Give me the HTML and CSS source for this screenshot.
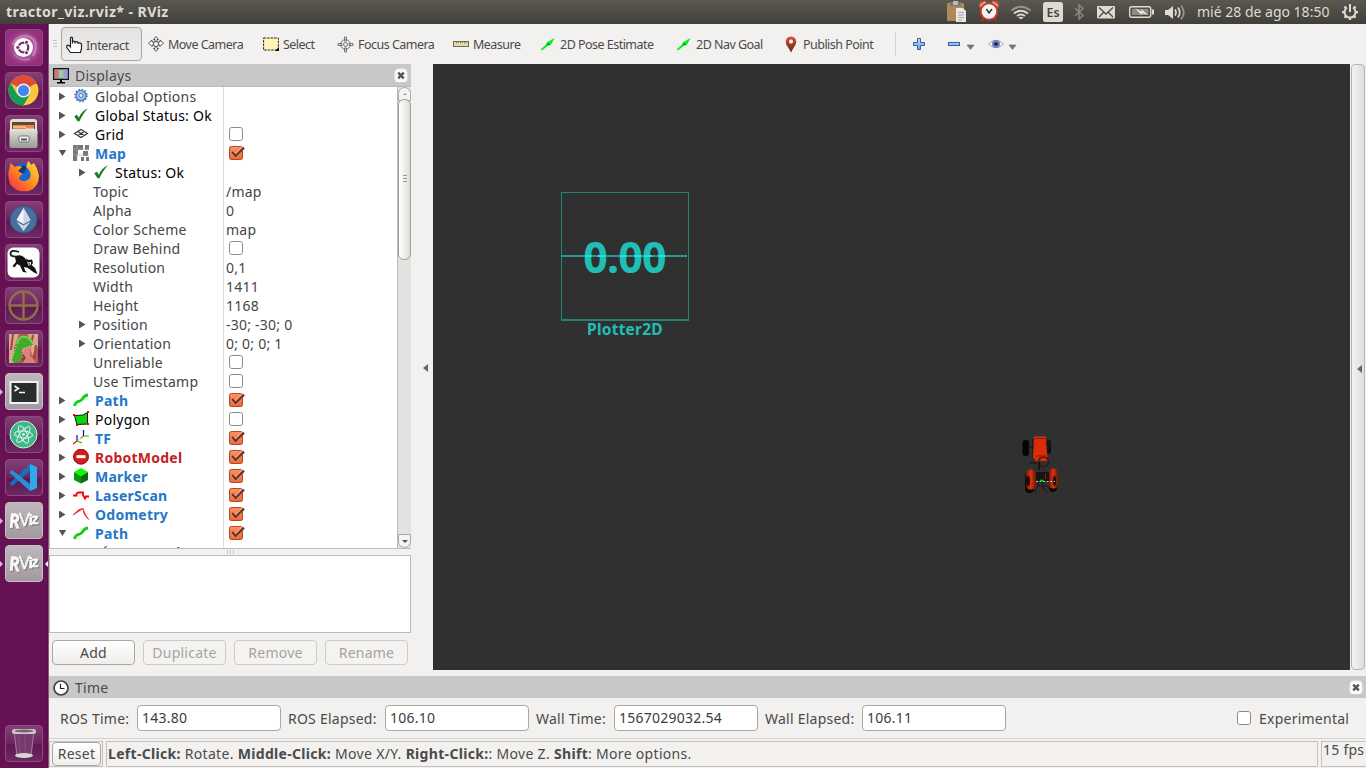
FILE: index.html
```html
<!DOCTYPE html>
<html lang="es">
<head>
<meta charset="utf-8">
<title>tractor_viz.rviz* - RViz</title>
<link rel="stylesheet" href="styles.css">
</head>
<body>
<svg class="defs" width="0" height="0">
  <defs>
    <linearGradient id="orange" x1="0" y1="0" x2="0" y2="1"><stop offset="0" stop-color="#ff9162"/><stop offset="1" stop-color="#e9683d"/></linearGradient>
    <linearGradient id="pin" x1="0" y1="0" x2="0" y2="1"><stop offset="0" stop-color="#e0502e"/><stop offset="1" stop-color="#5c2a1a"/></linearGradient>
    <linearGradient id="fox" x1="1" y1="0" x2="0" y2="1"><stop offset="0" stop-color="#ffe23c"/><stop offset=".5" stop-color="#ff8a1e"/><stop offset="1" stop-color="#f2214d"/></linearGradient>
    <linearGradient id="metal" x1="0" y1="0" x2="0" y2="1"><stop offset="0" stop-color="#e2e2e0"/><stop offset="1" stop-color="#9b9a98"/></linearGradient>
    <linearGradient id="blue" x1="0" y1="0" x2="0" y2="1"><stop offset="0" stop-color="#c9def5"/><stop offset="1" stop-color="#6f9fd8"/></linearGradient>
    <linearGradient id="wheel" x1="0" y1="0" x2="1" y2="0"><stop offset="0" stop-color="#7a1804"/><stop offset=".5" stop-color="#dc3208"/><stop offset="1" stop-color="#7a1804"/></linearGradient>
  </defs>
  <symbol id="i-check" viewBox="0 0 16 16"><path d="M1.200 9.200 4 7.800 5.800 10.800C8 6 10.500 3.300 14.800 1.200 11.500 5 8.800 9 6.500 14.200H4.600Z" fill="#1c7a22"/></symbol>
  <symbol id="i-path" viewBox="0 0 16 16"><path d="M1.600 14C2 10.500 4 9.800 6.500 9.200 11 8 9 3.500 15 3" fill="none" stroke="#0cd40c" stroke-width="2.900"/></symbol>
  <symbol id="i-box" viewBox="0 0 17 16"><rect x="1.500" y="1.500" width="13" height="13" rx="2.200" fill="#fff" stroke="#8f8b84"/></symbol>
  <symbol id="i-on" viewBox="0 0 17 16"><rect x="1.500" y="1.500" width="13" height="13" rx="1.800" fill="url(#orange)" stroke="#b9471f"/><path d="M4.500 7.500 7.500 10.800 15 3" fill="none" stroke="#ffb797" stroke-width="3.400"/><path d="M4.200 7 7.500 11 16 2.600" fill="none" stroke="#6b3524" stroke-width="2.300"/></symbol>
  <symbol id="i-close" viewBox="0 0 14 16"><rect x="1" y="1" width="12" height="14" rx="3.500" fill="#fbfbfa" stroke="#eeeeec"/><path d="M1.500 13.500Q2 15 4 15H10Q12 15 12.500 13.500" fill="none" stroke="#b3b1ad"/><path d="M4.200 4.700 9.800 10.300M9.800 4.700 4.200 10.300" stroke="#555" stroke-width="2.400"/></symbol>
  <symbol id="i-arrow" viewBox="0 0 18 16"><path d="M.500 14.500 7.500 7.700 6.700 6.800 16.500 1 12 9.500 9.800 9.300 2.500 15Z" fill="#08ee2b"/><path d="M8 8.500 10 7 10.500 9Z" fill="#054d0c"/></symbol>
</svg>

<header class="topbar">
  <span class="title">tractor_viz.rviz* - RViz</span>
  <svg class="tray" width="420" height="24" viewBox="0 0 420 24">
    <g><rect x="1" y="3" width="17" height="18" rx="1" fill="#b08857"/><rect x="4" y="2" width="11" height="4" fill="#77766f"/><rect x="7" y="1" width="5" height="4" fill="#b9b8b2"/><path d="M10 8H17L20 11V22H10Z" fill="#e9e8e5"/><path d="M12 12.500H18M12 15H18M12 17.500H18M12 20H16" stroke="#aaa"/></g>
    <g><circle cx="37" cy="5" r="4" fill="#d2523e"/><circle cx="49" cy="5" r="4" fill="#d2523e"/><path d="M34.500 6 39.500 2M46.500 2 51.500 6" stroke="#eeaa98" stroke-width="2"/><path d="M37.500 18 35.500 21M48.500 18 50.500 21" stroke="#a83020" stroke-width="2.500"/><circle cx="43" cy="11.500" r="8.300" fill="#f6f4f1" stroke="#c33a28" stroke-width="2"/><path d="M40.500 9 43 13 46 9" fill="none" stroke="#333" stroke-width="1.500"/></g>
    <g fill="none" stroke="#dfdbd2" stroke-width="2"><path d="M65.500 10.500Q75 3 84.500 10.500" stroke="#969389"/><path d="M68 13.500Q75 8 82 13.500"/><path d="M71 16Q75 13 79 16"/></g><path d="M72.200 17H77.800L75 19.500Z" fill="#dfdbd2"/>
    <rect x="97" y="2" width="20" height="20" rx="2.500" fill="#dfdbd2"/><text x="100.500" y="17" class="kb">Es</text>
    <path d="M129 8.200 137 15.500 133 19V5L137 8.500 129 15.800" fill="none" stroke="#8b887f" stroke-width="1.500"/>
    <rect x="151" y="6" width="18" height="12.500" rx="1" fill="#dfdbd2"/><path d="M153 7.500 160 14 167 7.500M153 17 157.500 12.500M167 17 162.500 12.500" fill="none" stroke="#4a4943" stroke-width="1.300"/>
    <rect x="183.700" y="6.700" width="21" height="10.600" rx="2" fill="none" stroke="#dfdbd2" stroke-width="1.400"/><rect x="206" y="9.500" width="2" height="5" fill="#dfdbd2"/><rect x="186" y="9" width="16.500" height="6" fill="#8e8b83"/><path d="M189 8 196 12 195 9 202 15 195.500 13 196 15.500Z" fill="#f2efe8"/>
    <path d="M219 10H222L227 6V19L222 15H219Z" fill="#dfdbd2"/><path d="M229 9.500Q231 12.500 229 15.500M232 7.500Q235.500 12.500 232 17.500" fill="none" stroke="#dfdbd2" stroke-width="1.700"/><path d="M235 5.500Q240.500 12.500 235 19.500" fill="none" stroke="#969389" stroke-width="1.700"/>
    <text x="251" y="17.200" class="clock">mié 28 de ago 18:50</text>
    <g stroke="#dfdbd2" fill="none"><path d="M401 7.500A5.500 5.500 0 1 0 407 7.500" stroke-width="2"/><path d="M404 4V12" stroke-width="2"/><path d="M396 12.200H398.500M409.500 12.200H412M398.500 6.500 400 8M408 8 409.500 6.500M398.500 17.800 400 16.200M408 16.200 409.500 17.800M404 17.500V20" stroke-width="2.200"/></g>
  </svg>
</header>

<div class="desktop">
<nav class="launcher">
  <div class="tile dash"><svg viewBox="0 0 37 37"><path d="M8 16A12.500 12.500 0 0 1 29 11Q33 18 28 27" fill="none" stroke="#d9a6cd" stroke-width="3" opacity=".5"/><path d="M9 25Q15 33 25 30" fill="none" stroke="#d9a6cd" stroke-width="2" opacity=".4"/><circle cx="18.500" cy="18.500" r="9.500" fill="#fff"/><circle cx="18.500" cy="18.500" r="4.800" fill="none" stroke="#7a2a6d" stroke-width="2.300"/><g fill="#7a2a6d" stroke="#fff"><circle cx="12.700" cy="18.500" r="2"/><circle cx="21.500" cy="13.300" r="2"/><circle cx="21.500" cy="23.700" r="2"/></g></svg></div>
  <div class="tile"><svg viewBox="0 0 37 37"><circle cx="18.500" cy="18.500" r="15" fill="#fbc63c"/><path d="M18.500 18.500 5.500 11A15 15 0 0 1 31.500 11Z" fill="#df4b3b"/><path d="M5.500 11A15 15 0 0 0 18.500 33.500L25 22 18.500 25 12 22Z" fill="#159c58"/><path d="M18.500 11.500H32" stroke="#df4b3b"/><circle cx="18.500" cy="18.500" r="7" fill="#f2f2f2"/><circle cx="18.500" cy="18.500" r="5.500" fill="#4386f0"/></svg></div>
  <div class="tile"><svg viewBox="0 0 37 37"><path d="M5 7Q5 4 8 4H29Q32 4 32 7V16H5Z" fill="#dededb"/><rect x="7" y="7" width="23" height="8" fill="#69462b"/><path d="M8 10H29V15H8Z" fill="#e7854b"/><path d="M8 12H20L22 14H29" stroke="#f8e2c8" fill="none"/><rect x="4.500" y="14" width="28" height="19" rx="2" fill="url(#metal)"/><rect x="14" y="21" width="10" height="6" rx="1" fill="#eee" stroke="#777"/><path d="M16 24.500H22" stroke="#555" stroke-width="2"/></svg></div>
  <div class="tile"><svg viewBox="0 0 37 37"><circle cx="19" cy="17" r="12" fill="#1667cf"/><path d="M12 10Q17 6 22 8L20 14 15 17 12 14Z" fill="#17357f"/><path d="M5.500 5 10 9Q14 7 17 9L13 13 18 16Q14 18 14 21 20 26 25 20 27 13 21 9L23 3Q26 5 26 7L29 5Q33 11 34 18 34 29 24 33 11 35 5 26 2 17 4.500 10Z" fill="url(#fox)"/></svg></div>
  <div class="tile"><svg viewBox="0 0 37 37"><circle cx="18.500" cy="18.500" r="13.500" fill="#496e9d" stroke="#35547e"/><path d="M18.500 7 11.500 19 18.500 23 25.500 19Z" fill="#f4f6fa"/><path d="M18.500 7V23L25.500 19ZM11.500 20.500 18.500 30 25.500 20.500 18.500 24.500Z" fill="#cbd5e5"/></svg></div>
  <div class="tile"><svg viewBox="0 0 37 37"><rect x="2.500" y="3.500" width="32" height="30" rx="6" fill="#fdfdfd"/><path d="M14 8Q5 5 5.500 10 6 13 13 12.500" fill="none" stroke="#222" stroke-width="1.800"/><path d="M10 13Q15 9 20 14L21.500 17 21 14.500 23.500 16 27 15.500 28 19 26.500 21 30 24 32.500 30 29 28.500 23 24 19 23 20 26.500 22 28.500 18 28 15 21.500 12 20 9.500 23.500 7.500 22 11 18Z" fill="#111"/><path d="M22 17.500 24 18.500 26 17.500 26 20.500 23.500 22Z" fill="#ddd"/><path d="M23.500 20H25" stroke="#111"/></svg></div>
  <div class="tile"><svg viewBox="0 0 37 37"><g fill="none" stroke="#917047" stroke-width="2.400"><circle cx="18.500" cy="18.500" r="14"/><path d="M18.500 5V32M5 18.500H32"/></g></svg></div>
  <div class="tile"><svg viewBox="0 0 37 37"><rect x="4" y="4" width="29" height="29" fill="#b65a50"/><path d="M4 4H14L9 18V33H4ZM23 4H33V16L27 26Z" fill="#dda88a"/><path d="M8 4 6 20M28 5 26 15M31 15 29 29" stroke="#a04746" stroke-width="2"/><path d="M17 16H26L25 25 31 33H17Z" fill="#dc8276"/><path d="M17 22 21 28 17 33" fill="#8f3c3e"/><path d="M11 15Q13 5 21 6.500L26 12Q29 12 28 15L19 18 16.500 19 17 27Q16 32 10 33 5 31 8 25Z" fill="#42aa2d"/><path d="M12 14Q14 5 21 7 26 9 28 14" fill="none" stroke="#6cd24f" stroke-width="2"/><path d="M11 16 7 29M28 15.500 18 19 17.500 29" fill="none" stroke="#d9f6d2" stroke-dasharray="1 2"/></svg></div>
  <div class="tile light running"><svg viewBox="0 0 37 37"><rect x="5.500" y="9" width="27" height="21" fill="#282d2e" stroke="#f2f2f2" stroke-width="2"/><path d="M9.500 13 13.500 15.500 9.500 18M14 19.500H20" fill="none" stroke="#fff" stroke-width="1.500"/></svg></div>
  <div class="tile"><svg viewBox="0 0 37 37"><circle cx="18.500" cy="18.500" r="13.500" fill="#3fb98a" stroke="#ddeee5"/><g fill="none" stroke="#d9f4e6" stroke-width="1"><ellipse cx="18.500" cy="18.500" rx="3.500" ry="9.500" transform="rotate(-25 18.500 18.500)"/><ellipse cx="18.500" cy="18.500" rx="3.500" ry="9.500" transform="rotate(40 18.500 18.500)"/><ellipse cx="18.500" cy="18.500" rx="3.500" ry="9" transform="rotate(95 18.500 18.500)"/></g><circle cx="18.500" cy="18.500" r="1.300" fill="#fff"/></svg></div>
  <div class="tile"><svg viewBox="0 0 37 37"><path d="M25 5 32 8V29L25 32Z" fill="#2fa8ef"/><path d="M25 12 7 27 4.500 24.500 25 5Z" fill="#1672b8"/><path d="M25 25 7 11 4.500 13.500 25 32Z" fill="#2491d8"/></svg></div>
  <div class="tile light rv running"><svg viewBox="0 0 37 37"><g class="rviz"><text x="4" y="26" font-size="20" textLength="11" lengthAdjust="spacingAndGlyphs" transform="rotate(5 9 20)">R</text><text x="14" y="24" font-size="18" font-weight="400" textLength="11" lengthAdjust="spacingAndGlyphs">V</text><text x="23.500" y="23" font-size="15" textLength="4">i</text><text x="26.500" y="22" font-size="15" textLength="7" lengthAdjust="spacingAndGlyphs">z</text></g></svg></div>
  <div class="tile light rv running focused"><svg viewBox="0 0 37 37"><g class="rviz"><text x="4" y="26" font-size="20" textLength="11" lengthAdjust="spacingAndGlyphs" transform="rotate(5 9 20)">R</text><text x="14" y="24" font-size="18" font-weight="400" textLength="11" lengthAdjust="spacingAndGlyphs">V</text><text x="23.500" y="23" font-size="15" textLength="4">i</text><text x="26.500" y="22" font-size="15" textLength="7" lengthAdjust="spacingAndGlyphs">z</text></g></svg></div>
  <div class="tile trash"><svg viewBox="0 0 37 37"><path d="M9 6H29L26 31Q18.500 34 12 31Z" fill="#763a6c"/><path d="M9 6 12 31M29 6 26 31" fill="none" stroke="#a77a9f"/><path d="M14 10 15 29M20 10V29" fill="none" stroke="#85507c"/><rect x="7" y="4" width="24" height="5" rx="2.500" fill="#cbcac6"/><ellipse cx="19" cy="6" rx="9.500" ry="1.500" fill="#746370"/><ellipse cx="19" cy="30.500" rx="9" ry="2.400" fill="#d6d5d0"/></svg></div>
</nav>

<main class="window">
  <div class="toolbar">
    <span class="grip"></span>
    <div class="tool active"><svg width="18" height="18" viewBox="0 0 18 18"><path d="M4.500 11V2Q5.500 .300 6.500 2V7.500 5.500Q8 4.500 9 5.800V7.500 6.300Q11 5 12 6.500V8 7.200Q14 6.500 15.500 8V12.500L14.500 16.500H4.500L.800 11.500V9.500Q2.500 8.500 4.500 11Z" fill="#fff" stroke="#222" stroke-width="1.200"/></svg><span>Interact</span></div>
    <div class="tool"><svg width="16" height="16" viewBox="0 0 16 16"><g fill="#f7f7f7" stroke="#4b4b4b" stroke-width=".900"><path d="M8 .600 10.500 3.500H9V6H7V3.500H5.500ZM8 15.400 10.500 12.500H9V10H7V12.500H5.500ZM.500 7 4 4V6H6V9H4V10.500ZM15.500 7 12 4V6H10V9H12V10.500Z"/><circle cx="8" cy="8" r="2.500"/></g></svg><span>Move Camera</span></div>
    <div class="tool"><svg width="16" height="16" viewBox="0 0 16 16"><rect x=".600" y="2" width="14.800" height="12" fill="#fff5b6" stroke="#222" stroke-dasharray="2.500 1"/><path d="M16 11V15H12Z"/></svg><span>Select</span></div>
    <div class="tool"><svg width="17" height="17" viewBox="0 0 17 17"><g fill="none" stroke="#747474"><circle cx="8.500" cy="8.500" r="4.800"/><circle cx="8.500" cy="8.500" r="2"/><path d="M7.500 1H9.500V5H7.500ZM7.500 12H9.500V16H7.500ZM1 7.500H5V9.500H1ZM12 7.500H16V9.500H12Z"/></g></svg><span>Focus Camera</span></div>
    <div class="tool"><svg width="16" height="16" viewBox="0 0 16 16"><rect x=".500" y="5.500" width="15" height="5" fill="#e8dba1" stroke="#6d675c"/><path d="M3.500 5V7.500M5.500 5V7M7.500 5V7.500M9.500 5V7M11.500 5V7.500M13.500 5V7" stroke="#6d675c" stroke-width=".800"/></svg><span>Measure</span></div>
    <div class="tool"><svg width="16" height="16"><use href="#i-arrow"/></svg><span>2D Pose Estimate</span></div>
    <div class="tool"><svg width="16" height="16"><use href="#i-arrow"/></svg><span>2D Nav Goal</span></div>
    <div class="tool pub"><svg width="14" height="17" viewBox="0 0 14 17"><path d="M7 .500Q12.300 1 12.300 6 12 9 9.500 12L7 16.500 4.500 12Q1.700 9 1.700 6 1.700 1 7 .500Z" fill="url(#pin)"/><circle cx="7" cy="5.500" r="2" fill="#fff"/></svg><span>Publish Point</span></div>
    <span class="sep"></span>
    <div class="icons"><svg width="110" height="24" viewBox="0 0 110 24"><g fill="url(#blue)" stroke="#2c62ad"><path d="M4.500 6.500H7.500V10.500H11.500V13.500H7.500V17.500H4.500V13.500H.500V10.500H4.500Z"/><rect x="35.500" y="10.500" width="11" height="3"/></g><path d="M54 13H61L57.500 17.500ZM96 13H103L99.500 17.500Z" fill="#777" stroke="#686868" stroke-width=".600"/><path d="M75.500 12Q83 4.500 90.500 12 83 19.500 75.500 12Z" fill="#f8f8f8" stroke="#aaa"/><circle cx="83" cy="12" r="4" fill="#6b83bd"/><circle cx="83" cy="12" r="1.800" fill="#171b35"/></svg></div>
  </div>

  <div class="work">
    <section class="displays">
      <div class="dock-head"><svg width="16" height="16" viewBox="0 0 16 16"><rect x=".700" y=".700" width="14.600" height="10.600" fill="#98ce98" stroke="#111" stroke-width="1.400"/><rect x="1.400" y="1.400" width="4.400" height="9.200" fill="#cc7380"/><rect x="10.200" y="1.400" width="4.400" height="9.200" fill="#9c99dc"/><path d="M7 12H9V14H12V15.500H4V14H7Z"/></svg><span>Displays</span><svg class="x" width="14" height="16"><use href="#i-close"/></svg></div>
      <div class="tree-box">
        <div class="tree">
          <div class="row"><i class="tri"></i><svg viewBox="0 0 16 16"><circle cx="8" cy="7.500" r="5" fill="#a8c5e8" stroke="#4676b8" stroke-width="1.200"/><circle cx="8" cy="7.500" r="6" fill="none" stroke="#4676b8" stroke-width="1.600" stroke-dasharray="1.700 1.400"/><circle cx="8" cy="7.500" r="2" fill="#e9f1fa" stroke="#4676b8"/></svg><span class="name">Global Options</span></div>
          <div class="row dark"><i class="tri"></i><svg><use href="#i-check"/></svg><span class="name">Global Status: Ok</span></div>
          <div class="row dark"><i class="tri"></i><svg viewBox="0 0 16 16"><path d="M1.500 7.500 8 3.500 14.500 7.500 8 11.500ZM4.800 5.500 11.300 9.500M11.300 5.500 4.800 9.500" fill="none" stroke="#333" stroke-width="1.100"/></svg><span class="name">Grid</span><svg class="cb"><use href="#i-box"/></svg></div>
          <div class="row on"><i class="tri open"></i><svg viewBox="0 0 16 16"><g fill="#777"><path d="M0 0H10V5H5V10H4V16H0ZM12 0H16V5H12ZM10 6H15V11H10ZM8 12H11V16H8ZM13 12H16V16H13Z"/></g><path d="M4 0V16M0 4H16M0 10H16" stroke="#aaa" stroke-width=".600"/></svg><span class="name">Map</span><svg class="cb"><use href="#i-on"/></svg></div>
          <div class="row sub dark"><i class="tri"></i><svg><use href="#i-check"/></svg><span class="name">Status: Ok</span></div>
          <div class="row prop"><span class="name">Topic</span><span class="val">/map</span></div>
          <div class="row prop"><span class="name">Alpha</span><span class="val">0</span></div>
          <div class="row prop"><span class="name">Color Scheme</span><span class="val">map</span></div>
          <div class="row prop"><span class="name">Draw Behind</span><svg class="cb"><use href="#i-box"/></svg></div>
          <div class="row prop"><span class="name">Resolution</span><span class="val">0,1</span></div>
          <div class="row prop"><span class="name">Width</span><span class="val">1411</span></div>
          <div class="row prop"><span class="name">Height</span><span class="val">1168</span></div>
          <div class="row prop exp"><i class="tri"></i><span class="name">Position</span><span class="val">-30; -30; 0</span></div>
          <div class="row prop exp"><i class="tri"></i><span class="name">Orientation</span><span class="val">0; 0; 0; 1</span></div>
          <div class="row prop"><span class="name">Unreliable</span><svg class="cb"><use href="#i-box"/></svg></div>
          <div class="row prop"><span class="name">Use Timestamp</span><svg class="cb"><use href="#i-box"/></svg></div>
          <div class="row on"><i class="tri"></i><svg><use href="#i-path"/></svg><span class="name">Path</span><svg class="cb"><use href="#i-on"/></svg></div>
          <div class="row dark"><i class="tri"></i><svg viewBox="0 0 16 16"><path d="M1.500 4.500 10 4 14.500 1.500V13L4 13.500Z" fill="#0bd40b" stroke="#111"/><path d="M0 3H2V5H0ZM14 0H16V2H14ZM3 13H5V15H3ZM14 12H16V14H14Z" fill="red"/></svg><span class="name">Polygon</span><svg class="cb"><use href="#i-box"/></svg></div>
          <div class="row on"><i class="tri"></i><svg viewBox="0 0 16 16"><g fill="none" stroke-width="1.200"><path d="M4 11V5M10.500 6V0" stroke="#00e"/><path d="M4 11 0 14M10.500 6 8 8" stroke="red"/><path d="M4 11 9 13M10.500 6H16" stroke="#0c0"/><path d="M4.500 10.500 10 6.500" stroke="#dc0" stroke-dasharray="2 1"/></g></svg><span class="name">TF</span><svg class="cb"><use href="#i-on"/></svg></div>
          <div class="row err"><i class="tri"></i><svg viewBox="0 0 16 16"><circle cx="8" cy="7.700" r="7.500" fill="#d21b1b" stroke="#991010"/><rect x="3.500" y="6.200" width="9" height="3" fill="#fff"/></svg><span class="name">RobotModel</span><svg class="cb"><use href="#i-on"/></svg></div>
          <div class="row on"><i class="tri"></i><svg viewBox="0 0 16 16"><path d="M8 0 15 4 8 8 1 4Z" fill="#0ef50e"/><path d="M1 4 8 8V15.500L1 12Z" fill="#069a06"/><path d="M15 4 8 8V15.500L15 12Z" fill="#057005"/></svg><span class="name">Marker</span><svg class="cb"><use href="#i-on"/></svg></div>
          <div class="row on"><i class="tri"></i><svg viewBox="0 0 16 16"><path d="M0 8.500H3.500V6.500L5.500 5.500H10V8L12 11.500 13 9.500H16" fill="none" stroke="red" stroke-width="1.800"/></svg><span class="name">LaserScan</span><svg class="cb"><use href="#i-on"/></svg></div>
          <div class="row on"><i class="tri"></i><svg viewBox="0 0 16 16"><path d="M0 9 6 3.500 10 2.500 5.500 5.500ZM10 2.500 12 8 15.500 13.500 11 8Z" fill="#e22" stroke="#e22" stroke-width=".800"/></svg><span class="name">Odometry</span><svg class="cb"><use href="#i-on"/></svg></div>
          <div class="row on"><i class="tri open"></i><svg><use href="#i-path"/></svg><span class="name">Path</span><svg class="cb"><use href="#i-on"/></svg></div>
          <div class="row sub dark last"><i class="tri"></i><svg><use href="#i-check"/></svg><span class="name">Status: Ok</span></div>
        </div>
        <div class="scroll"><span class="btn up"></span><span class="thumb"><i></i></span><span class="track"></span><span class="btn down"></span></div>
      </div>
      <div class="split"><i></i></div>
      <div class="help"></div>
      <div class="buttons"><span class="button">Add</span><span class="button off">Duplicate</span><span class="button off">Remove</span><span class="button off">Rename</span></div>
    </section>
    <div class="handle"><i></i></div>
    <section class="view">
      <svg class="tractor" width="40" height="62" viewBox="0 0 40 62">
        <rect x="1.500" y="5" width="6.500" height="16" rx="3" fill="#050505"/><rect x="25" y="5" width="5" height="14" rx="2.500" fill="#101010"/>
        <path d="M8 12H26M12 4V22M27 4V16M9 28H16" stroke="#1a1a1a" stroke-width="1.500"/>
        <path d="M13 1.500H25L26.500 26H15L12 22Z" fill="#d92c08"/><path d="M14 3.500H25M15 21H25M14 9H15M24 9H25" stroke="#851f0a"/>
        <circle cx="22.500" cy="27" r="5" fill="none" stroke="#3a1510" stroke-width="1.200"/>
        <path d="M18 27V35M16 38H29V45H16Z" fill="#151515" stroke="#151515" stroke-width="2"/><path d="M18 46 14 58M22 46V58M28 46 31 58M17 51H30M19 46 27 58" stroke="#1b1b1b" fill="none"/>
        <rect x="4" y="37" width="9" height="21" rx="4" fill="#0a0a0a"/><rect x="5" y="34.500" width="9.500" height="20" rx="4.500" fill="url(#wheel)"/><ellipse cx="7" cy="46" rx="2" ry="5" fill="#1d0905"/>
        <rect x="28" y="36" width="8" height="21" rx="4" fill="#0a0a0a"/><rect x="28" y="33.500" width="8.500" height="20" rx="4" fill="url(#wheel)"/><ellipse cx="33.500" cy="46" rx="1.500" ry="5" fill="#1d0905"/>
        <path d="M15 46.500H34" stroke="#bbb" stroke-dasharray="2 1.500"/><path d="M19 45.500H23" stroke="#0c2" stroke-width="1.500"/><path d="M24.500 39V44M21 55V58" stroke="#b00a22"/>
      </svg>
      <div class="plot"><svg width="128" height="129" viewBox="0 0 128 129"><rect x=".500" y=".500" width="127" height="127.500" fill="none" stroke="#258078"/><path d="M0 128H128" stroke="#258078" stroke-width="2"/><path d="M0 64H126" stroke="#258f87" stroke-width="2"/><path d="M0 64H126" stroke="#25a69d" stroke-width="2" stroke-dasharray="2 2"/><text x="63.500" y="80.500" text-anchor="middle" class="num">0.00</text><path d="M24 64H31M37 64H44M59 64H66M73 64H80M83 64H91M97 64H104" stroke="#19e6da" stroke-width="2"/></svg><span class="caption">Plotter2D</span></div>
    </section>
    <div class="views-handle"><i></i></div>
  </div>

  <section class="time">
    <div class="dock-head"><svg width="16" height="16" viewBox="0 0 16 16"><circle cx="8" cy="8" r="7" fill="#fff" stroke="#454545" stroke-width="1.700"/><path d="M7.500 4V8.500H11.500" fill="none" stroke="#222" stroke-width="1.200"/></svg><span>Time</span><svg class="x" width="14" height="16"><use href="#i-close"/></svg></div>
    <div class="fields">
      <label>ROS Time:</label><span class="field">143.80</span>
      <label>ROS Elapsed:</label><span class="field">106.10</span>
      <label>Wall Time:</label><span class="field">1567029032.54</span>
      <label>Wall Elapsed:</label><span class="field">106.11</span>
      <svg class="cb exp-cb"><use href="#i-box"/></svg><label>Experimental</label>
    </div>
  </section>
  <footer class="status">
    <div class="cell reset"><span class="button">Reset</span></div>
    <div class="cell msg"><span><b>Left-Click:</b> Rotate. <b>Middle-Click:</b> Move X/Y. <b>Right-Click:</b>: Move Z. <b>Shift</b>: More options.</span></div>
    <div class="cell fps">15 fps</div>
  </footer>
</main>
</div>
</body>
</html>
```

FILE: styles.css
```css
* { box-sizing: border-box; }
body {
  margin: 0; width: 1366px; height: 768px; overflow: hidden;
  font: 14px/19px "Noto Sans", "Open Sans", sans-serif; letter-spacing: .24px;
  color: #4a4a4a; background: #f2f1ef;
}
svg { display: block; flex: none; }
.defs { position: absolute; }
.topbar {
  display: flex; justify-content: space-between; height: 24px;
  background: linear-gradient(#5a5850, #403f3a);
}
.title { padding: 3px 0 0 6px; font-weight: 700; font-size: 14.200px; line-height: 18px; letter-spacing: .38px; color: #dfdbd2; }
.tray { overflow: visible; letter-spacing: 0; }
.kb { font-size: 12.500px; font-weight: 600; fill: #45443f; }
.clock { font-size: 14px; fill: #dfdbd2; }

.desktop { display: flex; height: 744px; }
.launcher {
  width: 49px; padding: 5px 0 6px 5px; display: flex; flex-direction: column; gap: 6px;
  background: linear-gradient(90deg, #651154 0 46px, #54104a);
  border-right: 1px solid #8d5681;
}
.tile {
  position: relative; width: 38px; height: 37px; flex: none; border-radius: 4px;
  border: 1px solid #8a4c7c; background: linear-gradient(#853f77, #6c2460 50%, #5d1751 51%, #6d2962);
}
.tile > svg { width: 37px; height: 37px; margin: -1px 0 0 -1px; }
.dash { background: radial-gradient(#c287b4, #95307f 70%); }
.light { background: linear-gradient(#bdb7bb, #a39aa1); border-color: #c6bfc3; }
.trash { margin-top: auto; }
.running::before, .focused::after { content: ""; position: absolute; top: 15px; border: 3px solid transparent; }
.running::before { left: -6px; border-left-color: #cfc0cc; border-right: 0; }
.focused::after { right: -6px; border-right-color: #fff; border-left: 0; }
.rviz { font-family: "Open Sans", sans-serif; font-weight: 700; letter-spacing: 0; fill: #f8f8f8; stroke: #fff; stroke-width: .4px; filter: drop-shadow(1px 1px 0 #777); }

.window { width: 1317px; display: flex; flex-direction: column; }
.toolbar {
  height: 40px; display: grid; align-items: center;
  grid-template-columns: 12px 87px 115px 74px 116px 87px 136px 108px 111px 18px 1fr;
  font-size: 12.500px; letter-spacing: -.52px; white-space: nowrap;
}
.grip { width: 4px; height: 9px; margin-left: 4px; background: repeating-linear-gradient(#c6c4c0 0 1px, transparent 1px 3px); }
.tool { display: flex; align-items: center; gap: 4px; }
.active { width: 81px; height: 34px; padding: 2px 0 0 4px; gap: 2px; letter-spacing: -.4px; border: 1px solid #a9a6a1; border-radius: 4px; background: linear-gradient(#e4e3e1, #efeeec); }
.pub { gap: 5px; }
.sep { width: 1px; height: 24px; background: #d4d2ce; }

.work { display: flex; height: 612px; }
.displays { width: 362px; display: flex; flex-direction: column; }
.dock-head { height: 22px; display: flex; align-items: center; padding: 1px 3px 0 4px; background: #c8c8c8; }
.dock-head span { margin: 0 auto 0 6px; }
.tree-box { height: 463px; display: flex; background: #fff; border: 1px solid #bdbbb7; border-width: 1px 0 1px 1px; }
.tree { width: 347px; height: 461px; overflow: hidden; background: linear-gradient(90deg, transparent 173px, #dcdcdc 173px 174px, transparent 174px); }
.row { display: flex; align-items: center; height: 19px; padding-left: 8px; white-space: nowrap; color: #454545; }
.row > svg { width: 16px; height: 16px; margin: -1px 6px 0 0; }
.row > .cb { width: 17px; height: 16px; margin: -1px 0 0 2px; }
.tri { width: 15px; height: 8px; flex: none; background: #555; clip-path: polygon(1px 0, 7.500px 4px, 1px 8px); }
.tri.open { clip-path: polygon(.500px 0, 8.500px 0, 4.500px 6.500px); }
.name { width: 131px; flex: none; }
.dark { color: #000; }
.on .name, .err .name { font-weight: 700; color: #2576c7; }
.err .name { color: #c42121; }
.sub { padding-left: 28px; }
.sub .name { width: 111px; }
.prop { padding-left: 43px; }
.prop .name { width: 133px; }
.prop.exp { padding-left: 28px; }
.scroll { width: 14px; display: flex; flex-direction: column; background: #e3e2e0; border-left: 1px solid #bdbbb7; }
.btn { height: 14px; border: 1px solid #aaa8a4; border-radius: 7px 7px 0 0; background: #f5f4f2; display: flex; justify-content: center; }
.btn::after { content: ""; margin-top: 5px; height: 0; border: 2.500px solid transparent; border-top: 0; border-bottom-color: #9a9a9a; }
.down { border-radius: 0 0 7px 7px; }
.down::after { border: 3px solid transparent; border-bottom: 0; border-top-color: #555; }
.thumb { height: 161px; margin-top: -2px; border: 1px solid #a09e9a; border-radius: 6px; background: linear-gradient(90deg, #fff, #deddda); display: flex; align-items: center; justify-content: center; }
.thumb i { width: 4px; height: 9px; background: repeating-linear-gradient(#999 0 1px, transparent 1px 3px); }
.track { flex: 1; }
.split { height: 6px; padding: 1px 0 0 178px; }
.split i { display: block; width: 9px; height: 4px; background: repeating-linear-gradient(90deg, #c5c3bf 0 1px, transparent 1px 3px); }
.help { height: 78px; border: 1px solid #bdbbb7; background: #fff; }
.buttons { display: flex; gap: 8px; padding: 7px 0 0 3px; }
.button { width: 83px; height: 25px; border: 1px solid #aaa7a2; border-radius: 4px; line-height: 23px; text-align: center; background: linear-gradient(#fff, #efeeec); }
.off { color: #a5a39f; border-color: #cecbc7; background: #f4f3f1; }
.handle { width: 22px; height: 607px; display: flex; align-items: center; padding-left: 12px; }
.handle i, .views-handle i { border: 4px solid transparent; border-left: 0; border-right: 5px solid #666; }
.view { position: relative; width: 917px; height: 606px; background: #303030; }
.tractor { position: absolute; left: 588px; top: 371px; }
.plot { position: absolute; left: 128px; top: 128px; width: 128px; text-align: center; }
.num { font-size: 43px; font-weight: 700; letter-spacing: -.8px; fill: #20bfb6; }
.caption { display: block; margin-top: -1px; font-size: 15.500px; font-weight: 700; line-height: 18px; color: #20bfb6; }
.views-handle { width: 14px; height: 606px; margin-left: 1px; padding: 3px 0 0 2px; display: flex; align-items: center; justify-content: center; border: 1px solid #b8b5b0; border-radius: 4px; background: linear-gradient(90deg, #f3f2f0, #dfdedb); }

.time { height: 62px; }
.fields { height: 40px; display: grid; align-items: center; grid-template-columns: 77px 151px 97px 151px 78px 151px 97px 374px 23px 1fr; padding-left: 11px; white-space: nowrap; }
.field { width: 144px; height: 26px; padding-left: 4px; line-height: 23px; border: 1px solid #aaa7a2; border-radius: 4px; background: #fff; color: #3c3c3c; }
.exp-cb { width: 17px; height: 16px; }
.status { display: flex; gap: 3px; height: 30px; border-top: 1px solid #d5d3cf; padding-top: 2px; }
.cell { height: 26px; border: 1px solid #c4c1bd; white-space: nowrap; }
.reset { width: 54px; padding: 0 2px; }
.reset .button { display: block; width: 49px; height: 24px; line-height: 22px; }
.msg { width: 1212px; padding: 2px 0 0 1px; letter-spacing: .315px; }
.fps { width: 45px; padding-left: 1px; line-height: 16px; border-right: 0; letter-spacing: .24px; }
```
